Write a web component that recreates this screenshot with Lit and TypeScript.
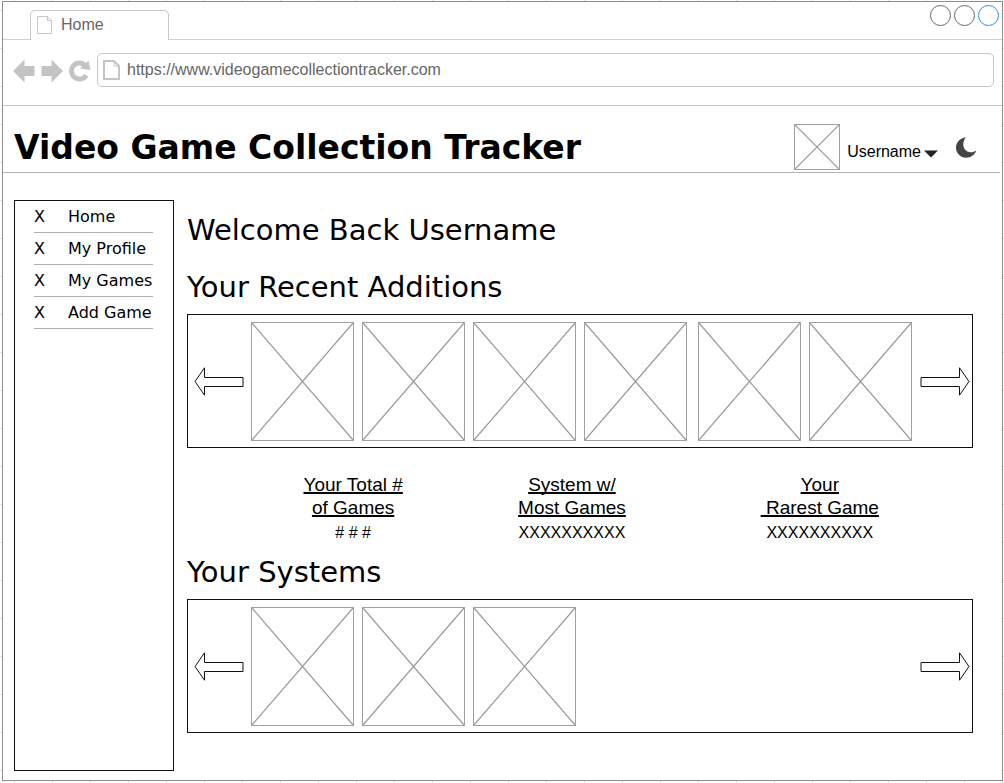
import { LitElement, html, css, svg } from "lit";
import { customElement, property } from "lit/decorators.js";

const reset = css`
  *,
  *::before,
  *::after {
    box-sizing: border-box;
  }
  button,
  input {
    margin: 0;
    padding: 0;
    border: 0;
    background: none;
    color: inherit;
    font: inherit;
  }
  button {
    cursor: pointer;
  }
  svg {
    display: block;
  }
`;

@customElement("image-placeholder")
export class ImagePlaceholder extends LitElement {
  static styles = css`
    :host {
      display: block;
      border: 1px solid #a0a0a0;
    }
    .cross {
      display: block;
      width: 100%;
      height: 100%;
    }
  `;

  render() {
    return html`<svg class="cross" viewBox="0 0 100 100" preserveAspectRatio="none" aria-hidden="true">
      <path d="M0 0L100 100M100 0L0 100" fill="none" stroke="#969696" stroke-width="1.2" vector-effect="non-scaling-stroke" />
    </svg>`;
  }
}

@customElement("browser-bar")
export class BrowserBar extends LitElement {
  static styles = [
    reset,
    css`
      :host {
        display: block;
        font-family: "Liberation Sans", Arial, sans-serif;
        font-size: 16px;
        color: #666;
      }
      .tabs {
        display: flex;
        align-items: flex-end;
        height: 38px;
        padding-left: 27px;
        border-bottom: 1px solid #d0d0d0;
      }
      .tab {
        display: flex;
        align-items: center;
        gap: 9px;
        width: 139px;
        height: 30px;
        margin-bottom: -1px;
        padding: 0 6px 2px;
        border: 1px solid #c8c8c8;
        border-bottom: 0;
        border-radius: 5px 5px 0 0;
        background: #fff;
      }
      .controls {
        display: flex;
        align-self: flex-start;
        gap: 3px;
        margin-left: auto;
        padding: 3px 3px 0 0;
      }
      .control {
        width: 21px;
        height: 21px;
        border: 1px solid #666;
        border-radius: 50%;
      }
      .active {
        border-color: #1a91ff;
      }
      .toolbar {
        display: flex;
        align-items: center;
        height: 66px;
        padding: 0 8px 5px 10px;
        border-bottom: 1px solid #c8c8c8;
      }
      .tools {
        display: flex;
        gap: 6px;
        margin-right: 6px;
        padding-top: 2px;
      }
      .address {
        display: flex;
        flex: 1;
        align-items: center;
        gap: 7px;
        height: 34px;
        padding: 0 5px;
        border: 1px solid #c8c8c8;
        border-radius: 5px;
      }
      .url {
        flex: 1;
        min-width: 0;
      }
    `,
  ];

  render() {
    return html`
      <div class="tabs">
        <div class="tab">
          <svg width="15" height="18" viewBox="0 0 15 18" fill="none" stroke="#c8c8c8" aria-hidden="true">
            <path d="M.5 .5H10.500L14.500 4.500V17.500H.5ZM10.500 .5V4.500H14.500" />
          </svg>
          <span>Home</span>
        </div>
        <div class="controls">
          <button class="control" aria-label="Minimize"></button>
          <button class="control" aria-label="Maximize"></button>
          <button class="control active" aria-label="Close"></button>
        </div>
      </div>
      <div class="toolbar">
        <div class="tools">
          <button aria-label="Back">
            <svg width="22" height="24" viewBox="0 0 22 24" fill="#c4c4c4"><path d="M0 12L11.500 .5V7H21.500V17H11.500V23.500Z" /></svg>
          </button>
          <button aria-label="Forward">
            <svg width="22" height="24" viewBox="0 0 22 24" fill="#c4c4c4"><path d="M22 12L10.500 .5V7H.5V17H10.500V23.500Z" /></svg>
          </button>
          <button aria-label="Reload">
            <svg width="22" height="24" viewBox="0 0 22 24">
              <path d="M16 6.200A8 8 0 1 0 17.300 16.200" fill="none" stroke="#c4c4c4" stroke-width="5" />
              <path d="M19.500 1.500L21.500 11L11 9.500Z" fill="#c4c4c4" />
            </svg>
          </button>
        </div>
        <div class="address">
          <svg width="17" height="20" viewBox="0 0 17 20" fill="none" stroke="#c4c4c4" stroke-width="2" aria-hidden="true">
            <path d="M1 1H11L16 6V19H1Z" /><path d="M11 1V6H16" stroke-width="1" />
          </svg>
          <input class="url" type="text" aria-label="Address" value="https://www.videogamecollectiontracker.com" />
        </div>
      </div>
    `;
  }
}

@customElement("site-header")
export class SiteHeader extends LitElement {
  static styles = [
    reset,
    css`
      :host {
        display: flex;
        align-items: flex-end;
        height: 67px;
        margin-right: 2px;
        padding: 0 23px 2px 11px;
        border-bottom: 1px solid #b4b4b4;
      }
      .title {
        flex: 1;
        margin: 0;
        font-size: 33px;
        line-height: 44px;
      }
      .account {
        display: flex;
        align-items: center;
        font-family: "Liberation Sans", Arial, sans-serif;
        font-size: 16px;
      }
      .avatar {
        width: 46px;
        height: 46px;
        margin-right: 7px;
      }
      .menu {
        display: flex;
        align-items: center;
        gap: 2px;
        margin-right: 17px;
        padding-top: 10px;
      }
      .arrow {
        margin-top: 4px;
      }
    `,
  ];

  render() {
    return html`
      <h1 class="title">Video Game Collection Tracker</h1>
      <div class="account">
        <image-placeholder class="avatar"></image-placeholder>
        <button class="menu" aria-haspopup="menu">
          <span>Username</span>
          <svg class="arrow" width="16" height="8" viewBox="0 0 16 8" fill="#222" aria-hidden="true">
            <path d="M1 .5H15L8 7.500Z" />
          </svg>
        </button>
        <button aria-label="Dark mode">
          <svg width="21" height="21" viewBox="0 0 21 21" fill="#444">
            <path d="M10 .3C4 1 0 5.500 0 10.800C0 16.300 4.500 20.800 10 20.800C15 20.800 19.300 17.500 20.300 13.300C18.500 14.800 16.500 15.400 14.500 15.300C10.500 15 7.500 12 7.300 8C7.200 5 8.200 2.200 10 .3Z" />
          </svg>
        </button>
      </div>
    `;
  }
}

@customElement("side-nav")
export class SideNav extends LitElement {
  static styles = [
    reset,
    css`
      :host {
        display: block;
        padding: 0 20px 0 19px;
        border: 1px solid #111;
      }
      .list {
        margin: 0;
        padding: 0;
        list-style: none;
      }
      .item {
        height: 32px;
        border-bottom: 1px solid #b0b0b0;
      }
      .link {
        display: grid;
        grid-template-columns: 34px auto;
        color: #000;
        font-size: 16px;
        line-height: 32px;
        white-space: nowrap;
        text-decoration: none;
      }
    `,
  ];

  render() {
    return html`<nav>
      <ul class="list">
        ${["Home", "My Profile", "My Games", "Add Game"].map(
          (label) => html`<li class="item"><a class="link" href="#"><span>X</span><span>${label}</span></a></li>`
        )}
      </ul>
    </nav>`;
  }
}

@customElement("card-shelf")
export class CardShelf extends LitElement {
  /** Number of cards in each group, left to right. */
  @property({ attribute: false }) groups: number[] = [];

  static styles = [
    reset,
    css`
      :host {
        display: flex;
        align-items: center;
        gap: 7px;
        padding: 7px 2px 6px 6px;
        border: 1px solid #111;
      }
      .groups {
        display: flex;
        flex: 1;
        gap: 11px;
      }
      .group {
        display: flex;
        gap: 8px;
      }
      .card {
        width: 103px;
        height: 119px;
      }
    `,
  ];

  private arrow(path: string) {
    return html`<svg width="50" height="30" viewBox="0 0 50 30" fill="none" stroke="#111" aria-hidden="true">
      ${svg`<path d=${path} />`}
    </svg>`;
  }

  render() {
    return html`
      <button aria-label="Previous">${this.arrow("M1 14.500L10.500 .8V10.500H49V19.500H10.500V28.200Z")}</button>
      <div class="groups">
        ${this.groups.map(
          (count) => html`<div class="group">
            ${Array.from({ length: count }, () => html`<image-placeholder class="card"></image-placeholder>`)}
          </div>`
        )}
      </div>
      <button aria-label="Next">${this.arrow("M49 14.500L39.500 .8V10.500H1V19.500H39.500V28.200Z")}</button>
    `;
  }
}

@customElement("app-root")
export class AppRoot extends LitElement {
  static styles = [
    reset,
    css`
      :host {
        display: flex;
        box-sizing: border-box;
        min-height: 100vh;
        padding: 1px 1px 2px 2px;
        background-color: #fff;
        background-image: linear-gradient(#e0e0e0 1px, transparent 1px),
          linear-gradient(90deg, #e0e0e0 1px, transparent 1px);
        background-size: 38px 38px;
        background-position: 14px 10px;
        color: #000;
        font-family: Verdana, "DejaVu Sans", sans-serif;
      }
      .window {
        display: flex;
        flex: 1;
        flex-direction: column;
        min-width: 0;
        border: 1px solid #8c8c8c;
        background: #fff;
      }
      .body {
        display: grid;
        flex: 1;
        grid-template-columns: 160px 1fr;
        gap: 13px;
        padding: 27px 29px 9px 11px;
      }
      .content {
        min-width: 0;
      }
      .heading {
        margin: 0;
        font-size: 29px;
        font-weight: 400;
        line-height: 36px;
      }
      .welcome {
        padding: 12px 0 21px;
      }
      .shelf-title {
        padding-bottom: 9px;
      }
      .stats {
        display: grid;
        grid-template-columns: 208fr 229fr 266fr;
        margin: 0;
        padding: 25px 20px 7px 62px;
        font-family: "Liberation Sans", Arial, sans-serif;
        text-align: center;
      }
      .name {
        font-size: 19px;
        line-height: 23px;
        text-decoration: underline;
        text-decoration-thickness: 2px;
        text-decoration-skip-ink: none;
        white-space: pre-line;
      }
      .value {
        margin: 0;
        font-size: 16px;
        line-height: 28px;
      }
    `,
  ];

  private stats = [
    { name: "Your Total #\nof Games", value: "# # #" },
    { name: "System w/\nMost Games", value: "XXXXXXXXXX" },
    { name: "Your\n\u00a0Rarest Game", value: "XXXXXXXXXX" },
  ];

  render() {
    return html`
      <div class="window">
        <browser-bar></browser-bar>
        <site-header></site-header>
        <div class="body">
          <side-nav></side-nav>
          <main class="content">
            <h2 class="heading welcome">Welcome Back Username</h2>
            <h2 class="heading shelf-title">Your Recent Additions</h2>
            <card-shelf .groups=${[4, 2]}></card-shelf>
            <dl class="stats">
              ${this.stats.map(
                (stat) => html`<div>
                  <dt class="name">${stat.name}</dt>
                  <dd class="value">${stat.value}</dd>
                </div>`
              )}
            </dl>
            <h2 class="heading shelf-title">Your Systems</h2>
            <card-shelf .groups=${[3]}></card-shelf>
          </main>
        </div>
      </div>
    `;
  }
}
